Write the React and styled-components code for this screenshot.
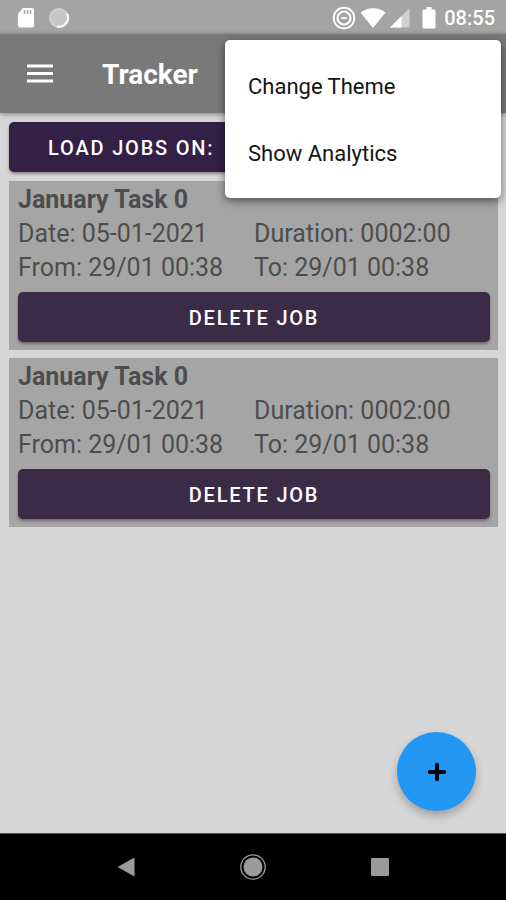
import React from "react";
import styled, { createGlobalStyle } from "styled-components";

const GlobalStyle = createGlobalStyle`
  *, *::before, *::after { box-sizing: border-box; }
  body {
    margin: 0;
    background: #d6d6d6;
    font-family: Roboto, "Liberation Sans", sans-serif;
  }
  button { font-family: inherit; border: 0; padding: 0; cursor: pointer; }
`;

const Screen = styled.div`
  position: relative;
  display: flex;
  flex-direction: column;
  min-height: 100vh;
  background: #d6d6d6;
`;

const StatusBar = styled.div`
  display: flex;
  align-items: center;
  justify-content: space-between;
  height: 34px;
  padding: 1px 11px 0 16px;
  background: #a4a4a4;
  color: #fff;
`;

const StatusGroup = styled.div`
  display: flex;
  align-items: center;
  gap: ${(p) => p.$gap}px;
  svg { display: block; }
`;

const PowerGroup = styled(StatusGroup)`
  margin-left: 8px;
`;

const Clock = styled.time`
  font-size: 20px;
  line-height: 32px;
  font-weight: 500;
`;

const AppBar = styled.header`
  position: relative;
  display: flex;
  align-items: center;
  gap: 48px;
  height: 79px;
  padding: 2px 26px 0;
  background: #797979;
  color: #fff;
  box-shadow: 0 1px 5px rgba(0, 0, 0, 0.4);
`;

const MenuButton = styled.button`
  width: 28px;
  height: 28px;
  background: none;
  color: #fff;
  svg { display: block; }
`;

const Title = styled.h1`
  margin: 0;
  font-size: 28px;
  line-height: 34px;
  font-weight: 700;
`;

const Popup = styled.div`
  position: absolute;
  z-index: 2;
  top: 40px;
  right: 5px;
  width: 276px;
  padding: 13px 0 11px;
  border-radius: 5px;
  background: #fff;
  box-shadow: 0 3px 8px rgba(0, 0, 0, 0.5);
`;

const PopupItem = styled.button`
  display: block;
  width: 100%;
  height: 67px;
  padding: 0 23px;
  background: none;
  color: #141414;
  font-size: 22px;
  text-align: left;
`;

const Main = styled.main`
  position: relative;
  flex: 1;
  display: flex;
  flex-direction: column;
  gap: 9px;
  padding: 9px 8px 9px 9px;
`;

const FilterRow = styled.div`
  display: grid;
  grid-template-columns: 1fr 1fr;
`;

const ActionButton = styled.button`
  width: 100%;
  height: 50px;
  padding: 2px 0 0;
  border-radius: 5px;
  background: ${(p) => (p.$strong ? "#341f46" : "#3b2b46")};
  color: #fff;
  font-size: 20px;
  font-weight: 500;
  letter-spacing: 0.09em;
  text-transform: uppercase;
  box-shadow: 0 2px 3px rgba(0, 0, 0, 0.35);
`;

const JobList = styled.ul`
  display: flex;
  flex-direction: column;
  gap: 8px;
  margin: 0;
  padding: 0;
  list-style: none;
`;

const JobCard = styled.li`
  display: flex;
  flex-direction: column;
  padding: 2px 8px 8px 9px;
  background: #a5a5a5;
  color: #4d4d4d;
  font-size: 25px;
  line-height: 34px;
`;

const JobTitle = styled.h2`
  margin: 0;
  font-size: 25px;
  line-height: 34px;
  font-weight: 700;
`;

const JobDetails = styled.div`
  display: grid;
  grid-template-columns: 1fr 1fr;
  margin-bottom: 7px;
  white-space: nowrap;
`;

const AddButton = styled.button`
  position: absolute;
  right: 30px;
  bottom: 22px;
  display: grid;
  place-items: center;
  width: 79px;
  height: 79px;
  border-radius: 50%;
  background: #2196f3;
  color: #000;
  box-shadow: 0 5px 9px rgba(0, 0, 0, 0.25);
`;

const NavBar = styled.nav`
  display: grid;
  grid-template-columns: repeat(3, 1fr);
  height: 67px;
  padding: 0 63px;
  border-top: 1px solid #555;
  background: #000;
`;

const NavButton = styled.button`
  display: grid;
  place-items: center;
  background: none;
  color: #9b9b9b;
`;

const SdCardIcon = () => (
  <svg width="20" height="22" viewBox="0 0 20 22" aria-hidden="true">
    <path d="M7 1h9a2 2 0 0 1 2 2v15.500a2 2 0 0 1-2 2H4a2 2 0 0 1-2-2V6.500z" fill="#fff" />
    <path d="M8.500 3v4M11.500 3v4M14.500 3v4" stroke="#a4a4a4" strokeWidth="1.500" />
  </svg>
);

const SyncIcon = () => (
  <svg width="22" height="22" viewBox="0 0 22 22" aria-hidden="true">
    <circle cx="11" cy="11" r="9" fill="#c6c6c6" stroke="#d0d0d0" strokeWidth="2" />
    <path d="M19 6.500A9 9 0 0 1 9 19.500" fill="none" stroke="#fff" strokeWidth="2" />
  </svg>
);

const DisturbIcon = () => (
  <svg width="24" height="24" viewBox="0 0 24 24" fill="none" stroke="#fff" aria-hidden="true">
    <circle cx="12" cy="12" r="10.300" strokeWidth="1.800" />
    <circle cx="12" cy="12" r="6.500" strokeWidth="2.200" />
    <path d="M9 12h6" strokeWidth="2" />
  </svg>
);

const WifiIcon = () => (
  <svg width="26" height="22" viewBox="0 0 26 22" aria-hidden="true">
    <path d="M.5 5.500C7.500-.3 18.500-.3 25.500 5.500L13 21z" fill="#fff" />
  </svg>
);

const SignalIcon = () => (
  <svg width="20" height="20" viewBox="0 0 20 20" aria-hidden="true">
    <path d="M0 19.500 19.500 0v19.500z" fill="#d0d0d0" />
    <path d="M0 19.500 11.500 8v11.500z" fill="#fff" />
  </svg>
);

const BatteryIcon = () => (
  <svg width="14" height="22" viewBox="0 0 14 22" aria-hidden="true">
    <path d="M4.500 0h5v2.500H12a1.500 1.500 0 0 1 1.500 1.500v16a1.500 1.500 0 0 1-1.500 1.500H2A1.500 1.500 0 0 1 .5 20V4A1.500 1.500 0 0 1 2 2.500h2.500z" fill="#fff" />
  </svg>
);

const HamburgerIcon = () => (
  <svg width="28" height="28" viewBox="0 0 28 28" stroke="currentColor" strokeWidth="3" aria-hidden="true">
    <path d="M1 5h26M1 12.500h26M1 20h26" />
  </svg>
);

const PlusIcon = () => (
  <svg width="20" height="20" viewBox="0 0 20 20" stroke="currentColor" strokeWidth="4" strokeLinecap="round" aria-hidden="true">
    <path d="M10 2.800v14.400M2.800 10h14.400" />
  </svg>
);

const BackIcon = () => (
  <svg width="18" height="20" viewBox="0 0 18 20" fill="currentColor" aria-hidden="true">
    <path d="M.5 10 17.500.5v19z" />
  </svg>
);

const HomeIcon = () => (
  <svg width="28" height="28" viewBox="0 0 28 28" aria-hidden="true">
    <circle cx="14" cy="14" r="12.200" fill="none" stroke="currentColor" strokeWidth="1.300" />
    <circle cx="14" cy="14" r="9.500" fill="currentColor" />
  </svg>
);

const RecentIcon = () => (
  <svg width="18" height="18" viewBox="0 0 18 18" aria-hidden="true">
    <rect width="18" height="18" rx="1" fill="currentColor" />
  </svg>
);

const jobs = [
  { id: 1, title: "January Task 0", date: "05-01-2021", duration: "0002:00", from: "29/01 00:38", to: "29/01 00:38" },
  { id: 2, title: "January Task 0", date: "05-01-2021", duration: "0002:00", from: "29/01 00:38", to: "29/01 00:38" },
];

function Job({ job }) {
  return (
    <JobCard>
      <JobTitle>{job.title}</JobTitle>
      <JobDetails>
        <span>Date: {job.date}</span>
        <span>Duration: {job.duration}</span>
        <span>From: {job.from}</span>
        <span>To: {job.to}</span>
      </JobDetails>
      <ActionButton type="button">Delete job</ActionButton>
    </JobCard>
  );
}

export default function App() {
  return (
    <>
      <GlobalStyle />
      <Screen>
        <StatusBar>
          <StatusGroup $gap={12}>
            <SdCardIcon />
            <SyncIcon />
          </StatusGroup>
          <StatusGroup $gap={4}>
            <DisturbIcon />
            <WifiIcon />
            <SignalIcon />
            <PowerGroup $gap={8}>
              <BatteryIcon />
              <Clock>08:55</Clock>
            </PowerGroup>
          </StatusGroup>
        </StatusBar>
        <AppBar>
          <MenuButton type="button" aria-label="Open navigation">
            <HamburgerIcon />
          </MenuButton>
          <Title>Tracker</Title>
        </AppBar>
        <Popup role="menu">
          <PopupItem type="button" role="menuitem">Change Theme</PopupItem>
          <PopupItem type="button" role="menuitem">Show Analytics</PopupItem>
        </Popup>
        <Main>
          <FilterRow>
            <ActionButton type="button" $strong>Load jobs on:</ActionButton>
          </FilterRow>
          <JobList>
            {jobs.map((job) => (
              <Job key={job.id} job={job} />
            ))}
          </JobList>
          <AddButton type="button" aria-label="Add job">
            <PlusIcon />
          </AddButton>
        </Main>
        <NavBar>
          <NavButton type="button" aria-label="Back"><BackIcon /></NavButton>
          <NavButton type="button" aria-label="Home"><HomeIcon /></NavButton>
          <NavButton type="button" aria-label="Recent apps"><RecentIcon /></NavButton>
        </NavBar>
      </Screen>
    </>
  );
}
